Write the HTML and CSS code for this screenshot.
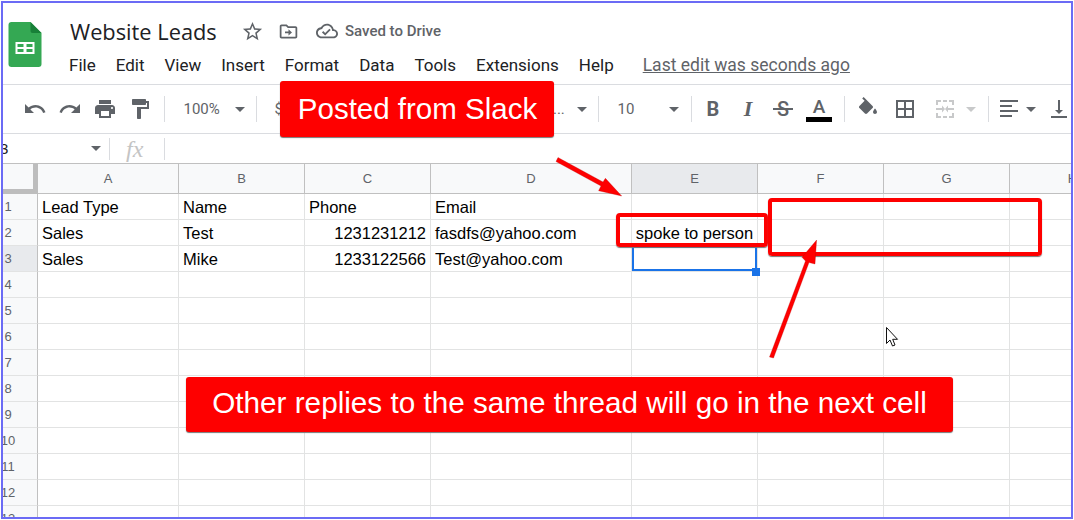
FILE: index.html
```html
<!DOCTYPE html>
<html lang="en">
<head>
<meta charset="utf-8">
<title>Website Leads</title>
<link rel="stylesheet" href="styles.css">
</head>
<body>
<div class="frame">
  <header class="top">
    <svg class="logo" viewBox="0 0 33 45"><path d="M3 0H22L33 11V42a3 3 0 0 1-3 3H3a3 3 0 0 1-3-3V3a3 3 0 0 1 3-3z" fill="#34a853"/><path d="M22 0L33 11H24a2 2 0 0 1-2-2z" fill="#188038"/><path d="M7 20H26V32H7zM9 22V25H15V22zM18 22V25H24V22zM9 27V30H15V27zM18 27V30H24V27z" fill="#fff" fill-rule="evenodd"/></svg>
    <div class="titles">
      <div class="title-row">
        <span class="doc-title">Website Leads</span>
        <svg class="ic star" viewBox="0 0 24 24"><path d="M22 9.24l-7.19-.62L12 2 9.19 8.63 2 9.24l5.46 4.73L5.82 21 12 17.27 18.18 21l-1.63-7.03L22 9.24zM12 15.4l-3.76 2.27 1-4.28-3.32-2.88 4.38-.38L12 6.1l1.71 4.04 4.38.38-3.32 2.88 1 4.28L12 15.4z"/></svg>
        <svg class="ic move" viewBox="0 0 24 24"><path d="M20 6h-8l-2-2H4c-1.1 0-2 .9-2 2v12c0 1.1.9 2 2 2h16c1.1 0 2-.9 2-2V8c0-1.1-.9-2-2-2zm0 12H4V6h5.17l2 2H20v10zm-8-4H8v-2h4V9.5l4 3.5-4 3.5V14z"/></svg>
        <svg class="ic cloud" viewBox="0 0 24 24"><path d="M19.35 10.04C18.67 6.59 15.64 4 12 4 9.11 4 6.6 5.64 5.35 8.04 2.34 8.36 0 10.91 0 14c0 3.31 2.69 6 6 6h13c2.76 0 5-2.24 5-5 0-2.64-2.05-4.78-4.65-4.96zM19 18H6c-2.21 0-4-1.79-4-4 0-2.05 1.53-3.76 3.56-3.97l1.07-.11.5-.95C8.08 7.14 9.94 6 12 6c2.62 0 4.88 1.86 5.39 4.43l.3 1.5 1.53.11c1.56.1 2.78 1.41 2.78 2.96 0 1.65-1.35 3-3 3zm-9-3.82l-2.09-2.09L6.5 13.5 10 17l6.01-6.01-1.41-1.41z"/></svg>
        <span class="saved">Saved to Drive</span>
      </div>
      <nav class="menu">
        <span>File</span><span>Edit</span><span>View</span><span>Insert</span><span>Format</span><span>Data</span><span>Tools</span><span>Extensions</span><span>Help</span>
        <a class="last-edit">Last edit was seconds ago</a>
      </nav>
    </div>
  </header>

  <div class="toolbar">
    <span class="tb"><svg class="ic" viewBox="0 0 24 24"><path d="M12.5 8c-2.65 0-5.05.99-6.9 2.6L2 7v9h9l-3.62-3.62c1.39-1.16 3.16-1.88 5.12-1.88 3.54 0 6.55 2.31 7.6 5.5l2.37-.78C21.08 11.03 17.15 8 12.5 8z"/></svg></span>
    <span class="tb"><svg class="ic" viewBox="0 0 24 24"><path d="M18.4 10.6C16.55 8.99 14.15 8 11.5 8c-4.65 0-8.58 3.03-9.96 7.22L3.9 16c1.05-3.19 4.05-5.5 7.6-5.5 1.95 0 3.73.72 5.12 1.88L13 16h9V7l-3.6 3.6z"/></svg></span>
    <span class="tb"><svg class="ic" viewBox="0 0 24 24"><path d="M19 8H5c-1.66 0-3 1.34-3 3v6h4v4h12v-4h4v-6c0-1.66-1.34-3-3-3zm-3 11H8v-5h8v5zm3-7c-.55 0-1-.45-1-1s.45-1 1-1 1 .45 1 1-.45 1-1 1zm-1-9H6v4h12V3z"/></svg></span>
    <span class="tb"><svg class="ic" viewBox="0 0 24 24"><path d="M18 4V3c0-.55-.45-1-1-1H5c-.55 0-1 .45-1 1v4c0 .55.45 1 1 1h12c.55 0 1-.45 1-1V6h1v4H9v11c0 .55.45 1 1 1h2c.55 0 1-.45 1-1v-9h8V4h-3z"/></svg></span>
    <i class="sep"></i>
    <span class="drop zoom-drop"><span class="val">100%</span><i class="caret"></i></span>
    <i class="sep"></i>
    <span class="drop hidden-run"><span class="val">$</span><span class="val dots">...</span><i class="caret"></i></span>
    <i class="sep"></i>
    <span class="drop size-drop"><span class="val">10</span><i class="caret"></i></span>
    <i class="sep"></i>
    <span class="tb glyph bold">B</span>
    <span class="tb glyph ital">I</span>
    <span class="tb glyph strike"><span class="struck">S</span></span>
    <span class="tb glyph color"><span>A</span><i class="swatch"></i></span>
    <i class="sep"></i>
    <span class="tb"><svg class="ic" viewBox="0 0 24 24"><path d="M16.56 8.94L7.62 0 6.21 1.41l2.38 2.38-5.15 5.15c-.59.59-.59 1.54 0 2.12l5.5 5.5c.29.29.68.44 1.06.44s.77-.15 1.06-.44l5.5-5.5c.59-.58.59-1.53 0-2.12zM19 11.5s-2 2.17-2 3.5c0 1.1.9 2 2 2s2-.9 2-2c0-1.33-2-3.5-2-3.5z"/></svg></span>
    <span class="tb borders"><svg class="ic" viewBox="0 0 24 24"><path d="M3 3v18h18V3H3zm8 16H5v-6h6v6zm0-8H5V5h6v6zm8 8h-6v-6h6v6zm0-8h-6V5h6v6z"/></svg></span>
    <span class="tb merge"><svg class="ic" viewBox="0 0 24 24"><path d="M3 3h5v2H5v3H3zM16 3h5v5h-2V5h-3zM10 3h4v2h-4zM3 16h2v3h3v2H3zM19 16h2v5h-5v-2h3zM10 19h4v2h-4zM3 11h6V8.5l3 3.5-3 3.5V13H3zM21 11h-6V8.5L12 12l3 3.5V13h6z"/></svg><i class="caret off"></i></span>
    <i class="sep"></i>
    <span class="tb align"><svg class="ic" viewBox="0 0 24 24"><path d="M3 3h18v2H3zM3 8h12v2H3zM3 13h18v2H3zM3 18h12v2H3z"/></svg><i class="caret"></i></span>
    <span class="tb"><svg class="ic" viewBox="0 0 24 24"><path d="M16 13h-3V3h-2v10H8l4 4 4-4zM4 19v2h16v-2H4z"/></svg></span>
  </div>

  <div class="formula">
    <div class="namebox"><span class="name">3</span><i class="caret"></i></div>
    <div class="fx"><span>fx</span></div>
  </div>

  <table class="sheet">
    <colgroup><col class="c0"><col class="ca"><col class="cm"><col class="cm"><col class="cd"><col class="cm"><col class="cm"><col class="cm"><col class="cm"></colgroup>
    <thead>
      <tr><th class="corner"></th><th>A</th><th>B</th><th>C</th><th>D</th><th class="on">E</th><th>F</th><th>G</th><th>H</th></tr>
    </thead>
    <tbody>
      <tr><th><span class="n">1</span></th><td>Lead Type</td><td>Name</td><td>Phone</td><td>Email</td><td></td><td></td><td></td><td></td></tr>
      <tr><th><span class="n">2</span></th><td>Sales</td><td>Test</td><td class="num">1231231212</td><td>fasdfs@yahoo.com</td><td class="mid">spoke to person</td><td></td><td></td><td></td></tr>
      <tr><th class="on"><span class="n">3</span></th><td>Sales</td><td>Mike</td><td class="num">1233122566</td><td>Test@yahoo.com</td><td class="sel"><i class="handle"></i></td><td></td><td></td><td></td></tr>
      <tr><th><span class="n">4</span></th><td></td><td></td><td></td><td></td><td></td><td></td><td></td><td></td></tr>
      <tr><th><span class="n">5</span></th><td></td><td></td><td></td><td></td><td></td><td></td><td></td><td></td></tr>
      <tr><th><span class="n">6</span></th><td></td><td></td><td></td><td></td><td></td><td></td><td></td><td></td></tr>
      <tr><th><span class="n">7</span></th><td></td><td></td><td></td><td></td><td></td><td></td><td></td><td></td></tr>
      <tr><th><span class="n">8</span></th><td></td><td></td><td></td><td></td><td></td><td></td><td></td><td></td></tr>
      <tr><th><span class="n">9</span></th><td></td><td></td><td></td><td></td><td></td><td></td><td></td><td></td></tr>
      <tr><th><span class="n">10</span></th><td></td><td></td><td></td><td></td><td></td><td></td><td></td><td></td></tr>
      <tr><th><span class="n">11</span></th><td></td><td></td><td></td><td></td><td></td><td></td><td></td><td></td></tr>
      <tr><th><span class="n">12</span></th><td></td><td></td><td></td><td></td><td></td><td></td><td></td><td></td></tr>
      <tr><th><span class="n">13</span></th><td></td><td></td><td></td><td></td><td></td><td></td><td></td><td></td></tr>
    </tbody>
  </table>
</div>

<div class="callout slack">Posted from Slack</div>
<div class="callout replies">Other replies to the same thread will go in the next cell</div>
<div class="mark mark-e"></div>
<div class="mark mark-f"></div>
<svg class="overlay" viewBox="0 0 1074 520">
  <path class="arrow" d="M556 161.5L558 157.5L603 182L605.4 178.3L621.7 196L598.6 190.7L601 186z"/>
  <path class="arrow" d="M769.5 357L773.5 358L809 262.5L815 264L816.6 240L802 257.3L805.5 261z"/>
  <path class="pointer" d="M886.5 327.5V343.5L890 340L892.5 346L895 345L892.7 339.3H897.5z"/>
</svg>
</body>
</html>
```
FILE: styles.css
```css
* { box-sizing: border-box; }
html, body { margin: 0; padding: 0; background: #fff; }
body { width: 1074px; height: 520px; overflow: hidden; position: relative; padding: 1px; font-family: Roboto, sans-serif; }
.frame { width: 1072px; height: 518px; border: 2px solid #6b6bf5; overflow: hidden; background: #fff; display: flex; flex-direction: column; }

.top { height: 81px; flex: none; display: flex; padding: 19px 0 0 5px; }
.logo { width: 34px; height: 45px; flex: none; }
.titles { margin-left: 27px; display: flex; flex-direction: column; margin-top: -1px; }
.title-row { display: flex; align-items: center; height: 28px; margin-top: -4px; }
.doc-title { font-family: "Open Sans", Roboto, sans-serif; font-size: 21.8px; color: #202124; margin-left: 1px; white-space: nowrap; width: 171px; }
.ic { width: 24px; height: 24px; fill: #5f6368; flex: none; }
.star { width: 23px; height: 23px; }
.move { margin-left: 14px; width: 21px; height: 21px; }
.cloud { margin-left: 17px; width: 22px; height: 22px; }
.saved { margin-left: 7px; font-size: 15px; font-weight: 500; color: #5f6368; white-space: nowrap; }
.menu { display: flex; gap: 20px; font-size: 17px; color: #202124; margin-top: 9px; white-space: nowrap; line-height: 22px; }
.last-edit { color: #5f6368; text-decoration: underline; margin-left: 9px; font-size: 17.5px; }

.toolbar { height: 50px; flex: none; display: flex; align-items: center; padding: 0 0 0 14.5px; border-top: 1px solid #dadce0; border-bottom: 1px solid #dadce0; color: #5f6368; white-space: nowrap; overflow: hidden; }
.tb { width: 35px; height: 30px; flex: none; display: flex; align-items: center; justify-content: center; }
.sep { width: 1px; height: 26px; background: #dadce0; flex: none; margin: 0 6px; }
.drop { display: flex; align-items: center; flex: none; height: 30px; }
.val { font-size: 15px; color: #5f6368; }
.caret { width: 0; height: 0; flex: none; border-left: 5px solid transparent; border-right: 5px solid transparent; border-top: 5px solid #5f6368; display: block; }
.caret.off { border-top-color: #c8c9ca; margin-left: 9px; }
.zoom-drop { width: 79px; padding-left: 13px; }
.zoom-drop .caret { margin-left: 15px; }
.hidden-run { width: 329px; padding-left: 12px; }
.hidden-run .dots { margin-left: 270px; }
.hidden-run .caret { margin-left: 12px; }
.size-drop { width: 80px; padding-left: 13px; }
.size-drop .caret { margin-left: 35px; }
.glyph { font-size: 20px; font-weight: 700; color: #5f6368; }
.bold { margin-left: -2px; }
.ital { font-style: italic; font-family: "Liberation Serif", serif; font-size: 22px; }
.strike { font-weight: 500; }
.struck { position: relative; display: block; line-height: 20px; }
.struck::after { content: ""; position: absolute; left: -4px; right: -4px; top: 9px; height: 2px; background: #5f6368; }
.color { flex-direction: column; font-weight: 500; font-size: 19px; line-height: 20px; margin: 0 1px; }
.swatch { width: 26px; height: 5px; background: #000; display: block; }
.borders { margin-left: 2px; }
.merge { width: 59px; justify-content: flex-start; padding-left: 10px; }
.merge .ic { fill: #c8c9ca; }
.align { justify-content: flex-start; padding-left: 2px; width: 46.5px; }
.align .caret { margin-left: 5px; }

.formula { height: 30px; flex: none; display: flex; align-items: center; border-bottom: 1px solid #c0c0c0; }
.namebox { width: 107px; height: 22px; flex: none; display: flex; align-items: center; justify-content: space-between; border-right: 1px solid #dadce0; padding-right: 8px; overflow: hidden; }
.name { font: 15px "Liberation Sans", sans-serif; color: #222; margin-left: -3px; }
.fx { height: 22px; flex: 1; display: flex; align-items: center; }
.fx span { width: 55px; padding-left: 16px; border-right: 1px solid #dadce0; font: italic 24px/22px "Liberation Serif", serif; color: #c4c4c4; }

.sheet { table-layout: fixed; border-collapse: separate; border-spacing: 0; width: 1133px; flex: none; font: 16.5px "Liberation Sans", sans-serif; color: #000; }
.c0 { width: 35px; }
.ca { width: 141px; }
.cm { width: 126px; }
.cd { width: 201px; }
thead th { height: 30px; padding: 0; background: #f8f9fa; border-right: 1px solid #c0c0c0; border-bottom: 1px solid #c0c0c0; font-weight: 400; font-size: 13px; color: #5f6368; }
thead th.on { background: #e8eaed; }
thead th.corner { border-right: 5px solid #bdbdbd; border-bottom: 5px solid #bdbdbd; background: #f8f9fa; }
tbody th { height: 26px; padding: 0; background: #f8f9fa; border-right: 1px solid #c0c0c0; border-bottom: 1px solid #e2e3e3; font-weight: 400; font-size: 13px; color: #5f6368; vertical-align: top; }
tbody th.on { background: #e8eaed; }
.n { display: flex; justify-content: center; width: 10px; margin-top: 5px; white-space: nowrap; }
td { height: 26px; padding: 0 4px 2px; border-right: 1px solid #e2e3e3; border-bottom: 1px solid #e2e3e3; vertical-align: bottom; white-space: nowrap; line-height: 20px; }
.num { text-align: right; }
.mid { text-align: center; padding: 0 0 2px; }
.sel { position: relative; box-shadow: inset 2px 0 0 #1a73e8, inset -2px 0 0 #1a73e8, inset 0 -2px 0 #1a73e8, inset 0 2px 0 #1a73e8; }
.handle { position: absolute; right: -3px; bottom: -5px; width: 8px; height: 8px; background: #1a73e8; display: block; z-index: 1; }

.callout { position: absolute; background: #fe0000; color: #fff; font-family: "Liberation Sans", sans-serif; border-radius: 3px; display: flex; align-items: center; justify-content: center; white-space: nowrap; box-shadow: 0 1px 1px #777; font-size: 29.7px; }
.slack { left: 280px; top: 81px; width: 274px; height: 56px; padding: 0 0 1px 1px; font-size: 29.5px; }
.replies { left: 186px; top: 377px; width: 767px; height: 55px; padding-bottom: 3px; }
.mark { position: absolute; border: 4px solid #fe0000; border-radius: 4px; box-shadow: 0 1px 1px #777; }
.mark-e { left: 616px; top: 213px; width: 152px; height: 34px; }
.mark-f { left: 768px; top: 198px; width: 274px; height: 58px; }
.overlay { position: absolute; left: 0; top: 0; width: 1074px; height: 520px; pointer-events: none; }
.arrow { fill: #fe0000; stroke: #b00; stroke-width: .3; }
.pointer { fill: #fff; stroke: #111; stroke-width: 1; stroke-linejoin: miter; }
```
